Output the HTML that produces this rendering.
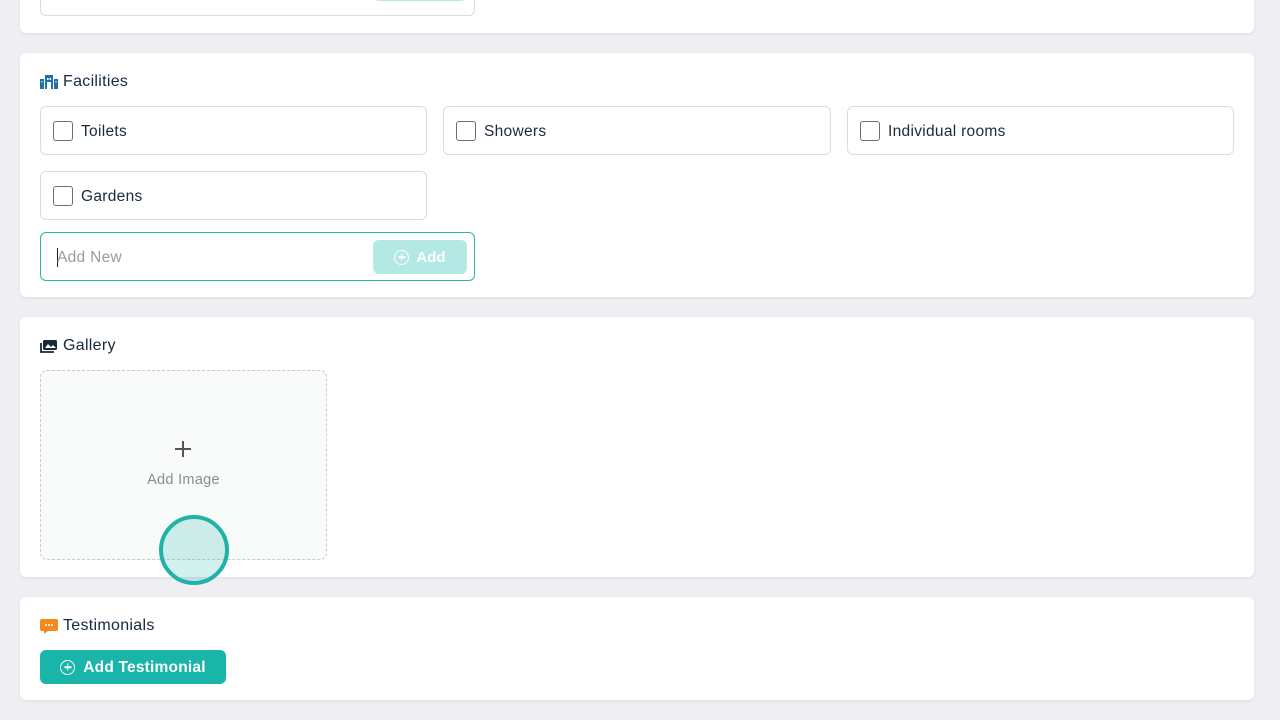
<!DOCTYPE html>
<html><head><style>
*{box-sizing:border-box;margin:0;padding:0}
body{width:1280px;height:720px;background:#efeef3;font-family:"Liberation Sans",sans-serif;color:#1b2a3a;position:relative;overflow:hidden}
.card{position:absolute;left:20px;width:1234px;background:#fff;border-radius:6px;box-shadow:0 1px 3px rgba(0,0,0,.08)}
.title{position:absolute;left:20px;font-size:16px;display:flex;align-items:center;gap:5px;color:#16283a;letter-spacing:.3px}
.box{position:absolute;height:49px;border:1px solid #dcdce0;border-radius:6px;background:#fff;display:flex;align-items:center;padding-left:12px;font-size:15.5px;padding-top:2px;letter-spacing:.3px}
.cb{width:20px;height:20px;border:1.5px solid #6b6f76;border-radius:3px;margin-right:8px;margin-top:-1px}
.inp{position:absolute;border:1px solid #2bb3a6;border-radius:6px;background:#fff;width:435px;height:49px}
.addb{position:absolute;right:7px;top:7px;width:94px;height:34px;background:#b3e8e5;border-radius:6px;color:#fff;font-weight:bold;font-size:15px;display:flex;align-items:center;justify-content:center;gap:7px}
.circ{width:15px;height:15px;border:1.5px solid currentColor;border-radius:50%;position:relative;display:inline-block}
.circ:before,.circ:after{content:"";position:absolute;background:currentColor;left:50%;top:50%;transform:translate(-50%,-50%)}
.circ:before{width:7px;height:1.5px}.circ:after{width:1.5px;height:7px}
</style></head><body>
<div class="card" style="top:-10px;height:43px">
 <div class="inp" style="left:20px;top:-23px;border-color:#dcdce0"><div class="addb" style="top:14px;height:19px"></div></div>
</div>
<div class="card" style="top:53px;height:244px">
 <div class="title" style="top:20px"><svg width="18" height="14" viewBox="0 0 18 14"><g fill="#1f6fa8"><rect x="0" y="4" width="4" height="10"/><rect x="5" y="0" width="8" height="14"/><rect x="14" y="4" width="4" height="10"/></g><g fill="#fff"><rect x="7" y="3" width="1.5" height="2"/><rect x="9.5" y="3" width="1.5" height="2"/><rect x="7" y="7" width="4" height="7"/><rect x="1.5" y="6" width="1" height="1.5"/><rect x="15.5" y="6" width="1" height="1.5"/></g></svg>Facilities</div>
 <div class="box" style="left:20px;top:53px;width:387px"><div class="cb"></div>Toilets</div>
 <div class="box" style="left:423px;top:53px;width:388px"><div class="cb"></div>Showers</div>
 <div class="box" style="left:827px;top:53px;width:387px"><div class="cb"></div>Individual rooms</div>
 <div class="box" style="left:20px;top:118px;width:387px"><div class="cb"></div>Gardens</div>
 <div class="inp" style="left:20px;top:179px"><div style="position:absolute;left:16px;top:15px;height:19px;border-left:1px solid #222"></div><span style="position:absolute;left:16px;top:16px;font-size:15.5px;color:#9a9ca3;letter-spacing:.3px">Add New</span><div class="addb"><span class="circ"></span>Add</div></div>
</div>
<div class="card" style="top:317px;height:260px">
 <div class="title" style="top:20px"><svg width="18" height="15" viewBox="0 0 18 15"><rect x="3" y="1" width="14" height="10" rx="1.5" fill="#16283a"/><path d="M5 9l3-4 3 3 2-2 3 3z" fill="#fff"/><path d="M1 4v9h13" stroke="#16283a" stroke-width="1.8" fill="none"/></svg>Gallery</div>
 <div style="position:absolute;left:20px;top:53px;width:287px;height:190px;border:1.5px dashed #c9cacf;border-radius:7px;background:#f9fafa">
  <div style="position:absolute;left:134px;top:77px;width:16px;height:1.5px;background:#555"></div>
  <div style="position:absolute;left:141.3px;top:70px;width:1.5px;height:16px;background:#555"></div>
  <div style="position:absolute;left:0;right:0;top:101px;text-align:center;font-size:14.5px;color:#8a8d96;letter-spacing:.3px">Add Image</div>
 </div>
</div>
<div class="card" style="top:597px;height:103px">
 <div class="title" style="top:20px"><svg width="18" height="17" viewBox="0 0 18 17"><path d="M2 1h14a2 2 0 012 2v8a2 2 0 01-2 2H8l-4 3v-3H2a2 2 0 01-2-2V3a2 2 0 012-2z" fill="#f28a1c"/><g fill="#fff"><circle cx="6" cy="7" r="1"/><circle cx="9" cy="7" r="1"/><circle cx="12" cy="7" r="1"/></g></svg>Testimonials</div>
 <div style="position:absolute;left:20px;top:53px;width:186px;height:34px;background:#19b5a9;border-radius:6px;color:#fff;font-weight:bold;font-size:15.5px;display:flex;align-items:center;justify-content:center;gap:8px;letter-spacing:.2px;padding-top:2px"><span class="circ" style="margin-top:-2px"></span>Add Testimonial</div>
</div>
<div style="position:absolute;left:159px;top:515px;width:70px;height:70px;border:4px solid #1fb3a7;border-radius:50%;background:rgba(31,179,167,.2)"></div>
</body></html>
